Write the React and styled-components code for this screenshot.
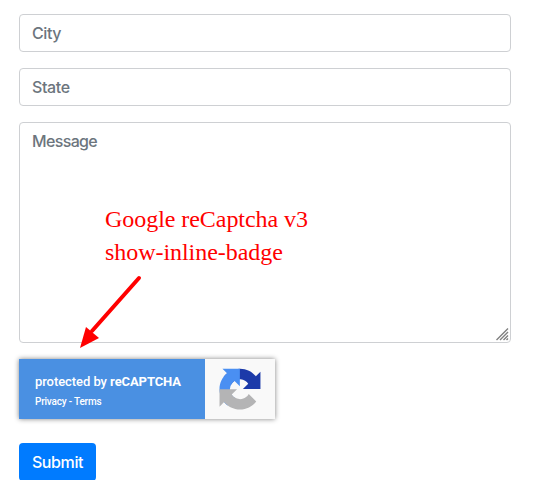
import React from 'react';
import styled, { createGlobalStyle } from 'styled-components';

const GlobalStyle = createGlobalStyle`
  *, *::before, *::after { box-sizing: border-box; }
  html, body { margin: 0; background: #fff; overflow: hidden; }
`;

const Form = styled.form`
  position: relative;
  height: 480px;
  padding: 14px 29px 0 19px;
  display: flex;
  flex-direction: column;
  align-items: flex-start;
  gap: 16px;
  overflow: hidden;
  font-family: Inter, 'Liberation Sans', sans-serif;
`;

const Field = styled.div`
  position: relative;
  flex: none;
  width: 100%;
  height: ${({ $height }) => $height}px;
  padding: 6px 12px;
  border: 1px solid #ced0d3;
  border-radius: 4px;
  color: #6c757d;
  font-size: 16px;
  font-weight: 500;
  line-height: 24px;
  letter-spacing: ${({ $tracking = -0.4 }) => $tracking}px;
`;

const Grip = styled.svg`
  position: absolute;
  right: 0;
  bottom: 0;
`;

const Badge = styled.div`
  flex: none;
  display: flex;
  width: 256px;
  height: 60px;
  box-shadow: 0 0 5px #808080;
`;

const Notice = styled.div`
  width: 186px;
  padding: 15px 0 0 16px;
  background: #4a90e2;
  color: #fff;
  font-family: Roboto, sans-serif;
`;

const Protected = styled.div`
  font-size: 13px;
  font-weight: 500;
  line-height: 16px;
  letter-spacing: -0.06px;
  white-space: nowrap;

  strong { font-weight: 700; letter-spacing: -0.1px; }
`;

const Links = styled.div`
  margin-top: 5px;
  font-size: 10px;
  font-weight: 500;
  line-height: 13px;
  letter-spacing: -0.2px;
  white-space: nowrap;
`;

const LogoPanel = styled.div`
  width: 70px;
  background: #f9f9f9;
`;

const Submit = styled.button`
  flex: none;
  width: 77px;
  height: 38px;
  margin-top: 8px;
  padding: 0;
  border: 0;
  border-radius: 4px;
  background: #007bff;
  color: #fff;
  font-family: Inter, sans-serif;
  font-size: 16px;
  font-weight: 500;
  line-height: 24px;
  letter-spacing: -0.4px;
`;

const Note = styled.div`
  position: absolute;
  left: 105px;
  top: 203px;
  color: #f00;
  font-family: 'Liberation Serif', serif;
  font-size: 24px;
  line-height: 33px;
  letter-spacing: -0.05px;
  white-space: nowrap;
`;

const Arrow = styled.svg`
  position: absolute;
  left: 76px;
  top: 270px;
`;

function RecaptchaLogo() {
  return (
    <svg width="70" height="60" viewBox="0 0 70 60">
      <g transform="translate(14.5 9.7) scale(0.64)">
        <path fill="#1c3aa9" d="M64 31.955l-.033-1.37V4.687l-7.16 7.16C50.948 4.674 42.033.093 32.05.093c-10.4 0-19.622 4.96-25.458 12.64l11.736 11.86a15.55 15.55 0 0 1 4.754-5.334c2.05-1.6 4.952-2.906 8.94-2.906.48 0 .853.056 1.127.162 4.94.39 9.222 3.116 11.744 7.073l-8.307 8.307 27.414-.06" />
        <path fill="#4a8ff2" d="M31.862.094l-1.37.033H4.594l7.16 7.16C4.58 13.147 0 22.06 0 32.046c0 10.4 4.96 19.622 12.64 25.458L24.5 45.768a15.55 15.55 0 0 1-5.334-4.754c-1.6-2.05-2.906-4.952-2.906-8.94 0-.48.056-.853.162-1.127.39-4.94 3.116-9.222 7.073-11.744l8.307 8.307L31.862.094" />
        <path fill="#b4b4b5" d="M.001 32.045l.033 1.37v25.898l7.16-7.16c5.86 7.173 14.774 11.754 24.76 11.754 10.4 0 19.622-4.96 25.458-12.64l-11.736-11.86a15.55 15.55 0 0 1-4.754 5.334c-2.05 1.6-4.952 2.906-8.94 2.906-.48 0-.853-.056-1.127-.162-4.94-.39-9.222-3.116-11.744-7.073l8.307-8.307-27.414.06" />
      </g>
    </svg>
  );
}

export default function App() {
  return (
    <>
      <GlobalStyle />
      <Form>
        <Field $height={38}>City</Field>
        <Field $height={38}>State</Field>
        <Field $height={221} $tracking={-0.65}>
          Message
          <Grip width="16" height="16" viewBox="0 0 16 16" stroke="#808080" strokeWidth="1.4">
            <path d="M2.5 14L14 2.5M6 14L14 6M9.5 14L14 9.5M12.5 14L14 12.5" />
          </Grip>
        </Field>
        <Badge>
          <Notice>
            <Protected>protected by <strong>reCAPTCHA</strong></Protected>
            <Links>Privacy - Terms</Links>
          </Notice>
          <LogoPanel><RecaptchaLogo /></LogoPanel>
        </Badge>
        <Submit type="button">Submit</Submit>
        <Note>Google reCaptcha v3<br />show-inline-badge</Note>
        <Arrow width="70" height="84" viewBox="0 0 70 84">
          <path d="M63 8L16 61" stroke="#f00" strokeWidth="4" strokeLinecap="round" />
          <path d="M4 78L10 57L23 68Z" fill="#f00" />
        </Arrow>
      </Form>
    </>
  );
}
